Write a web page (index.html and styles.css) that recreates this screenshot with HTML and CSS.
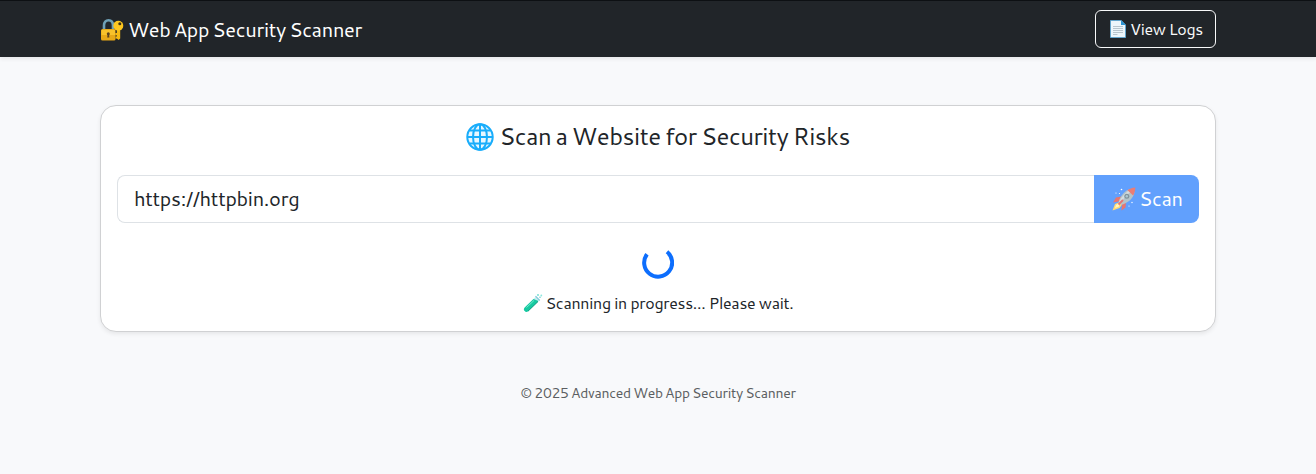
FILE: index.html
```html
<!DOCTYPE html>
<html lang="en">
<head>
<meta charset="utf-8">
<title>Web App Security Scanner</title>
<link rel="stylesheet" href="styles.css">
</head>
<body>
<nav class="navbar">
  <div class="container navbar-inner">
    <a class="brand">
      <svg class="icon icon-lock" viewBox="0 0 24 24">
        <path d="M4 12V7.500C4 4 5.800 2.300 8.500 2.300s4.500 1.700 4.500 5.200V12" fill="none" stroke="#6fa0b5" stroke-width="2.600"/>
        <path d="M16.800 11h3.400v9.500l-1.500 1.500-1.900-1.500z" fill="#f5b912"/>
        <path d="M17.500 15h-2.300v2.200h2.300zM17.500 18.500h-2v2h2z" fill="#f5b912"/>
        <circle cx="18.300" cy="7.800" r="5" fill="#fdc71f"/>
        <circle cx="19.800" cy="5.800" r="1.500" fill="#3e3516"/>
        <rect x="1" y="11" width="14.500" height="11.500" rx="1.500" fill="#e7a817"/>
        <path d="M1.500 12h13.500v5H1.500z" fill="#f8c22b"/>
        <circle cx="8.300" cy="15.800" r="1.500" fill="#5b421f"/>
        <path d="M7.600 16h1.400l.4 3.500H7.200z" fill="#5b421f"/>
      </svg>
      <span class="t-brand">Web App Security Scanner</span>
    </a>
    <a class="logs-button">
      <svg class="icon icon-page" viewBox="0 0 18 18">
        <path d="M1.500.5h10.700L16.500 5v12.500h-15z" fill="#edf6fb" stroke="#63a5cd"/>
        <path d="M12 .3 16.800 5H12z" fill="#2b93d1"/>
        <path d="M4 6.500h10M4 8.500h10M4 10.500h10M4 12.500h10M4 14.500h4.500" stroke="#a9b9c2" stroke-width=".8"/>
      </svg>
      <span class="t-logs">View Logs</span>
    </a>
  </div>
</nav>
<main class="container">
  <section class="card">
    <h1 class="title">
      <svg class="icon icon-globe" viewBox="0 0 28 28">
        <circle cx="14" cy="14" r="13.500" fill="#e8f7ff"/>
        <g fill="none" stroke="#19adfb" stroke-width="2">
          <circle cx="14" cy="14" r="12.700"/>
          <ellipse cx="14" cy="14" rx="7" ry="12.700"/>
          <path d="M14 1v26M1 14h26M3.500 7.500h21M3.500 20.500h21"/>
        </g>
      </svg>
      <span class="t-title">Scan a Website for Security Risks</span>
    </h1>
    <div class="scan-form">
      <div class="url-field"><span class="t-url">https://httpbin.org</span></div>
      <div class="scan-button">
        <svg class="icon icon-rocket" viewBox="0 0 24 24">
          <path d="M8 15l-5 2-2.500 6.500L7.500 21l3-4z" fill="#ffc928"/>
          <path d="M7 16l-3 2-1 3 4-1.500z" fill="#fff1a0"/>
          <path d="M9.500 9.500 4 10.500 1 15.500l7-1.300zM14 15l-.5 5.500-4 3 .5-7z" fill="#d92d25"/>
          <path d="M6.500 15.500C8 9 13 3 19 2l3.500 3.500C21 12 15 16.500 9 18z" fill="#8fa5ad"/>
          <path d="M7 15C10 9 14 5 19 2l1.500 1.500C15 7 11 12 8 17z" fill="#bdcbd0"/>
          <path d="M15.500 3.200C19 .5 23.300.5 23.300.5s0 4.500-2.200 8z" fill="#df382c"/>
          <circle cx="14.800" cy="9.200" r="2.500" fill="#405c68"/><circle cx="14.800" cy="9.200" r="1.200" fill="#82abb9"/>
          <path d="M6.500 17.500 11 13" stroke="#d92d25" stroke-width="2"/>
          <g fill="#fff"><circle cx="9.500" cy="2.500" r=".8"/><circle cx="4" cy="6" r=".6"/><circle cx="7.500" cy="6.500" r=".6"/><circle cx="20" cy="15.500" r=".7"/><circle cx="17" cy="19" r=".6"/></g>
        </svg>
        <span class="t-scan">Scan</span>
      </div>
    </div>
    <div class="progress">
      <svg class="spinner" viewBox="0 0 32 32"><path d="M25 4.800A14 14 0 1 1 5 7.200" fill="none" stroke="#0d6efd" stroke-width="4"/></svg>
      <p class="status">
        <svg class="icon icon-tube" viewBox="0 0 20 20">
          <path d="M13 3.500 1.700 14.500a2.400 2.400 0 0 0 3.500 3.500L16.500 7z" fill="#c5edf0"/>
          <path d="M10.500 6 1.700 14.500a2.400 2.400 0 0 0 3.500 3.500L15.500 8z" fill="#16c9a0"/>
          <path d="M5 18.200 15 8.500" stroke="#089b7e" stroke-width="1"/>
          <path d="M3.500 14.500 11 7.500" stroke="#70e8cb" stroke-width="1"/>
          <path d="m12.500 3.200 4.300 4.300" stroke="#80c7d9" stroke-width="1.200"/>
          <circle cx="15" cy="2" r=".9" fill="#69ddd0"/><circle cx="18.300" cy="2.500" r=".9" fill="#8be7dd"/><circle cx="17" cy="4.300" r=".7" fill="#54c9c5"/>
        </svg>
        <span class="t-status">Scanning in progress... Please wait.</span>
      </p>
    </div>
  </section>
</main>
<footer class="footer"><span class="t-footer">© 2025 Advanced Web App Security Scanner</span></footer>
</body>
</html>
```
FILE: styles.css
```css
* { box-sizing: border-box; }
body { margin: 0; background: #f8f9fb; color: #212529; font: 16px/24px Cantarell, "Noto Sans", sans-serif; }
.container { width: 1116px; margin: 0 auto; }
.navbar { height: 57px; background: #212529; border-top: 1px solid #0d1013; box-shadow: 0 2px 4px rgba(0, 0, 0, .075); color: #fff; }
.navbar-inner { height: 56px; display: flex; align-items: center; justify-content: space-between; }
.brand, .logs-button, .title, .scan-button, .status { display: flex; align-items: center; white-space: nowrap; }
.icon { display: block; flex: none; }
.brand { height: 34px; font-size: 20px; line-height: 28px; }
.icon-lock { width: 24px; height: 24px; margin-top: 2px; margin-right: 4px; }
.logs-button { width: 121px; height: 38px; margin-bottom: 1px; padding-left: 13px; border: 1px solid #f8f9fa; border-radius: 6px; color: #f8f9fa; }
.icon-page { width: 18px; height: 18px; margin-right: 3px; }
.card { height: 227px; margin-top: 48px; padding: 16px; background: #fff; border: 1px solid #d0d1d3; border-radius: 16px; box-shadow: 0 2px 4px rgba(0, 0, 0, .075); }
.title { justify-content: center; height: 29px; margin: 0 0 24px; font-size: 24px; line-height: 29px; font-weight: 400; }
.icon-globe { width: 28px; height: 28px; margin-right: 5px; }
.scan-form { display: flex; height: 48px; font-size: 20px; line-height: 28px; }
.url-field { flex: 1; padding: 8px 16px; border: 1px solid #dee2e6; border-right: 0; border-radius: 8px 0 0 8px; }
.scan-button { width: 105px; padding-left: 18px; background: #0d6efd; border-radius: 0 8px 8px 0; color: #fff; opacity: .65; }
.icon-rocket { width: 24px; height: 24px; margin-right: 3px; }
.progress { display: flex; flex-direction: column; align-items: center; padding-top: 24px; }
.spinner { width: 32px; height: 32px; }
.status { margin: 12px 0 0; }
.icon-tube { width: 20px; height: 20px; margin-right: 3px; }
.footer { margin-top: 49px; text-align: center; color: #5b5e61; font-size: 14px; line-height: 24px; }
.t-brand { letter-spacing: -.3px; word-spacing: -2.1px; }
.t-logs { letter-spacing: -.3px; word-spacing: -1px; }
.t-title { letter-spacing: -.48px; word-spacing: -1.8px; }
.t-url { letter-spacing: -.3px; }
.t-scan { letter-spacing: -.3px; padding-bottom: 2px; }
.t-status { letter-spacing: -.3px; word-spacing: -.6px; }
.t-footer { letter-spacing: -.3px; word-spacing: -1.2px; }
```
